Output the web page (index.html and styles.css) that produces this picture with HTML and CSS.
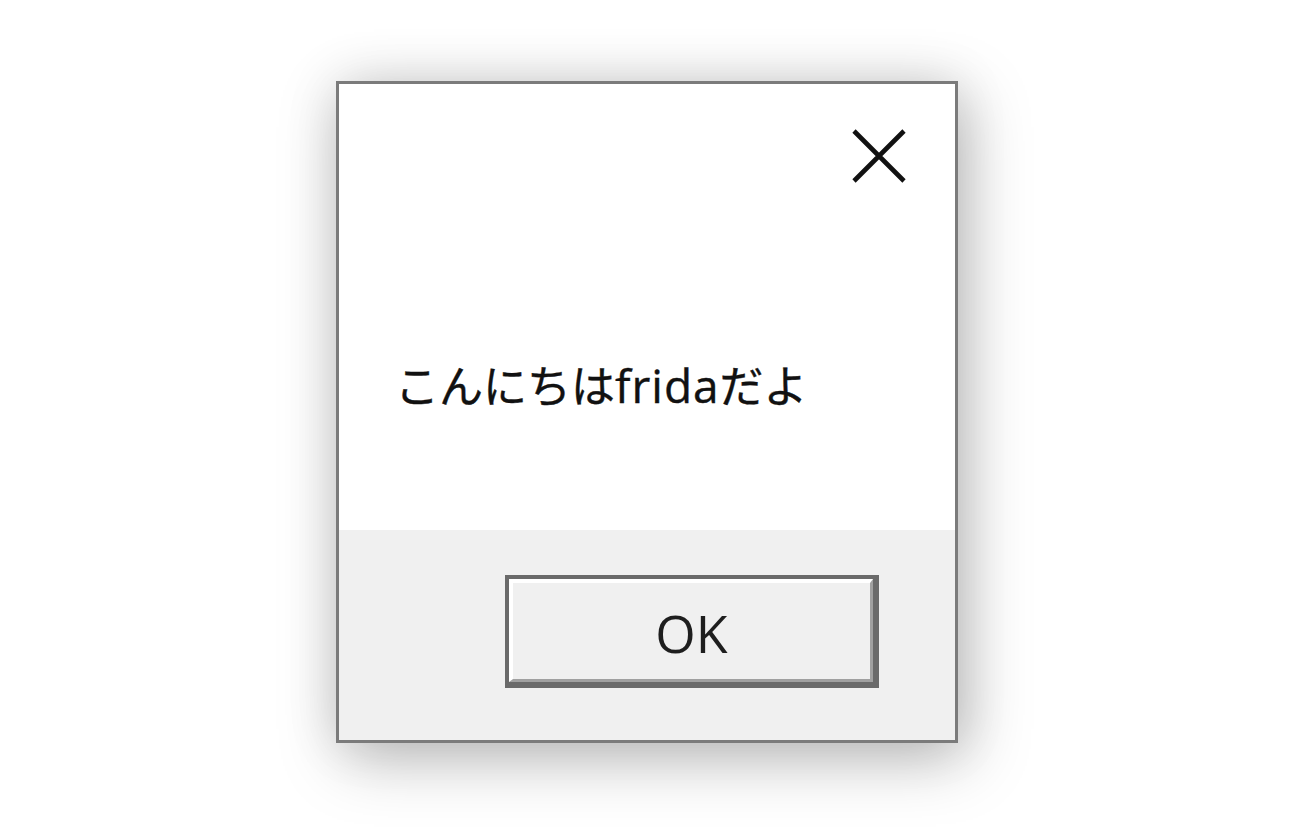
FILE: index.html
```html
<!DOCTYPE html>
<html lang="ja">
<head>
<meta charset="utf-8">
<link rel="stylesheet" href="styles.css">
<title>frida</title>
</head>
<body>
<div class="stage">
  <div class="dialog">
    <div class="content">
      <div class="titlebar">
        <div class="close">
          <svg width="54" height="54" viewBox="0 0 54 54">
            <path d="M2 2 L52 52 M52 2 L2 52" stroke="#111" stroke-width="4.6" stroke-linecap="butt" fill="none"/>
          </svg>
        </div>
      </div>
      <div class="message">こんにちは<span class="latin">frida</span>だよ</div>
    </div>
    <div class="footer">
      <button class="ok"><span class="ok-inner">OK</span></button>
    </div>
  </div>
</div>
</body>
</html>
```

FILE: styles.css
```css
html, body {
  margin: 0;
  padding: 0;
  background: #ffffff;
  width: 1300px;
  height: 840px;
  overflow: hidden;
}

.stage {
  padding-top: 81px;
  padding-left: 336px;
}

.dialog {
  width: 616px;
  height: 656px;
  border: 3px solid #7b7b7b;
  background: #ffffff;
  display: flex;
  flex-direction: column;
  box-shadow: 8px 16px 60px rgba(0, 0, 0, 0.26), 0 0 50px rgba(0, 0, 0, 0.10);
}

.content {
  height: 446px;
  display: flex;
  flex-direction: column;
}

.titlebar {
  display: flex;
  justify-content: flex-end;
  padding-top: 45px;
  padding-right: 49px;
}

.close {
  width: 54px;
  height: 54px;
}

.close svg {
  display: block;
}

.message {
  margin-top: 174px;
  padding-left: 56px;
  font-family: "Open Sans", "Noto Sans CJK JP", sans-serif;
  font-size: 44px;
  line-height: 56px;
  color: #111111;
  -webkit-text-stroke: 0.4px #111111;
}

.latin {
  font-size: 46px;
  letter-spacing: 1px;
}

.footer {
  flex: 1;
  background: #f0f0f0;
  display: flex;
  justify-content: flex-end;
  align-items: flex-start;
  padding-top: 45px;
  padding-right: 76px;
}

.ok {
  width: 374px;
  height: 113px;
  padding: 0;
  margin: 0;
  border-style: solid;
  border-color: #6a6a6a;
  border-width: 4px 6px 6px 4px;
  background: #f0f0f0;
  display: flex;
  cursor: default;
}

.ok-inner {
  flex: 1;
  display: flex;
  align-items: center;
  justify-content: center;
  border-style: solid;
  border-width: 4px 3px 3px 4px;
  border-color: #ffffff #a0a0a0 #a0a0a0 #ffffff;
  font-family: "Open Sans", "Noto Sans", sans-serif;
  font-size: 52px;
  color: #1e1e1e;
  padding-top: 2px;
}
```
